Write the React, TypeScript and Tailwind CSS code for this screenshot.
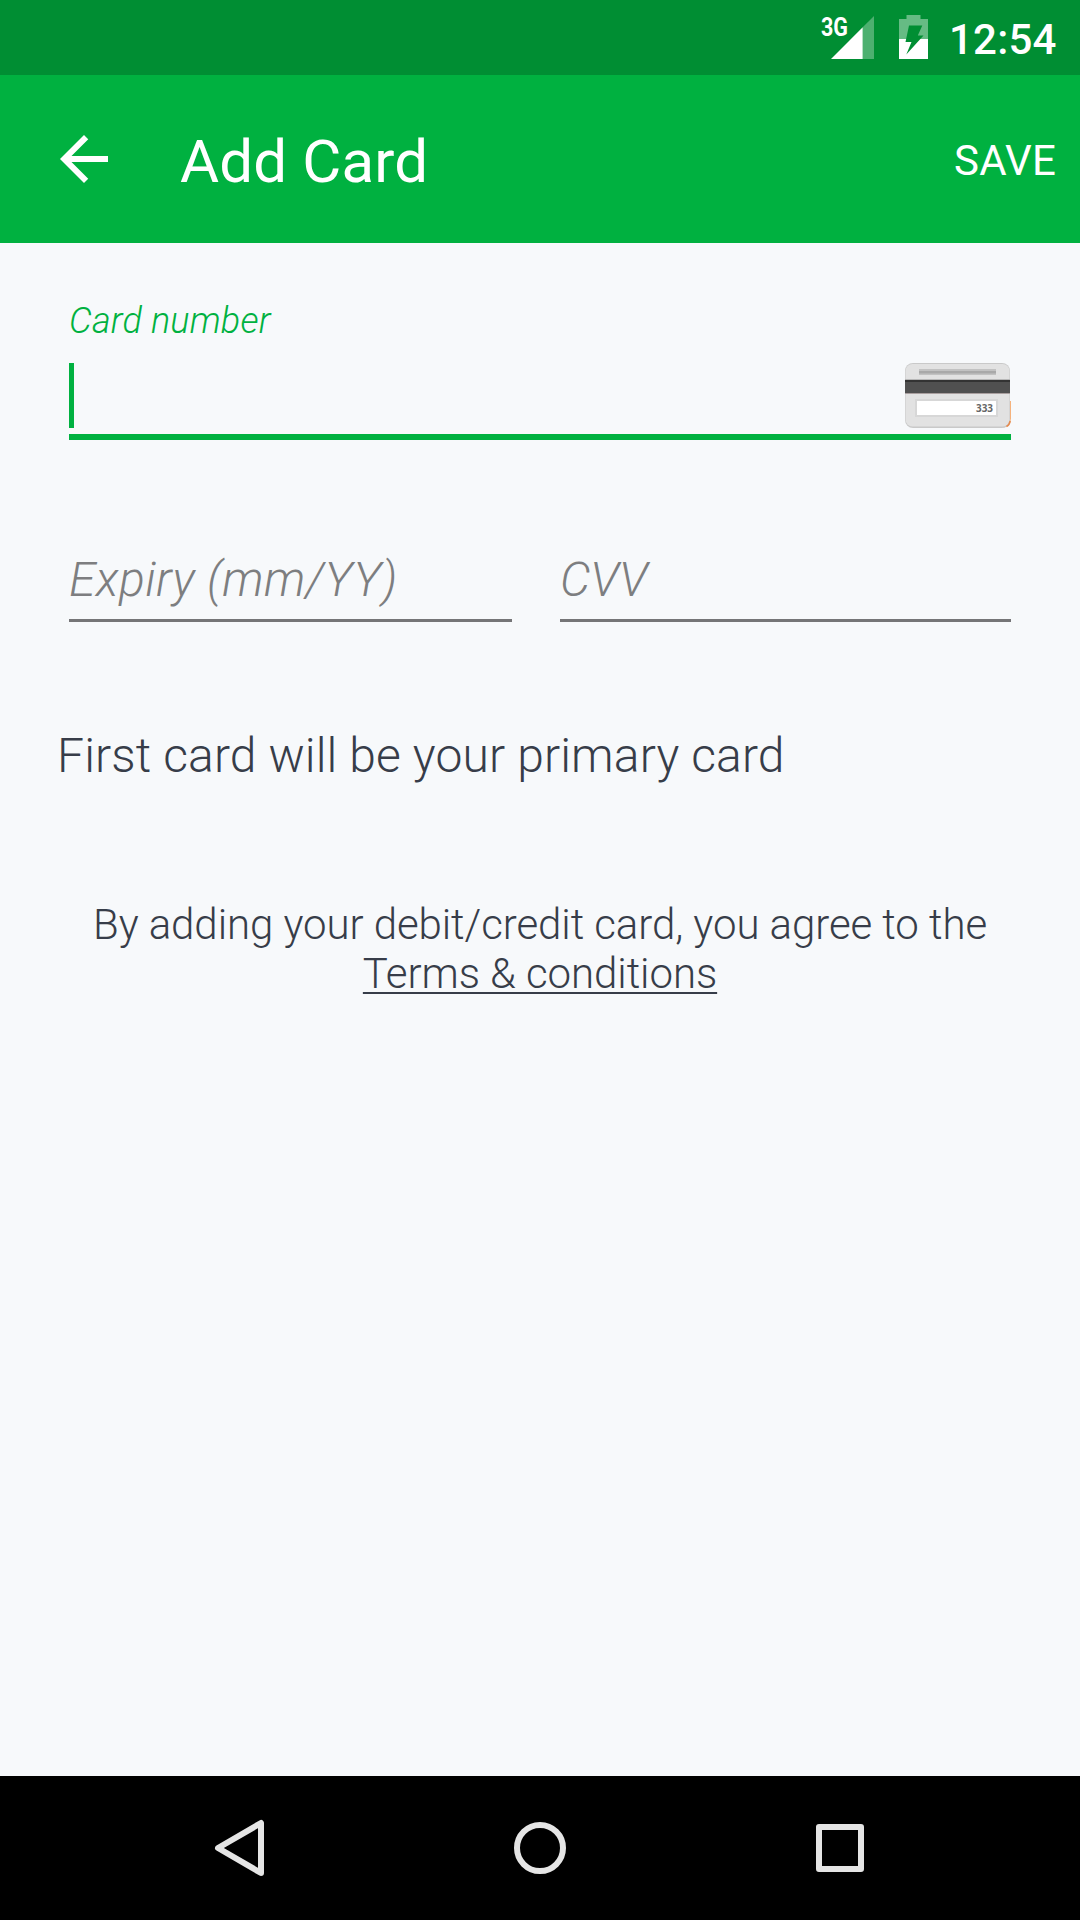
function SignalIcon() {
  return (
    <svg width="54" height="75" viewBox="820 0 54 75" className="block">
      <text x="821" y="35.5" textLength="27" lengthAdjust="spacingAndGlyphs" fill="#fff" className="font-['Roboto',sans-serif] text-[26px] font-bold">3G</text>
      <path d="M862.7 27.3 874 16V59H862.7Z" fill="#fff" fillOpacity="0.3" />
      <path d="M831 59 862.7 27.3V59Z" fill="#fff" />
    </svg>
  );
}

function BatteryIcon() {
  const bolt = "M909 25.5H922.3L917.8 35.5H923.5L906.3 54.5 911.5 42H905.5Z";
  return (
    <svg width="30" height="75" viewBox="899 0 30 75" className="block">
      <path d="M906.5 15H920.5V19H928V39H899V19H906.5Z" fill="#fff" fillOpacity="0.4" />
      <path d="M899 39H928V59H899Z" fill="#fff" />
      <path d={bolt} fill="#008e33" />
    </svg>
  );
}

function CardIcon() {
  return (
    <svg width="106" height="65" viewBox="0 0 106 65" className="block">
      <path d="M98 64.5Q106 64 106 55V38H103V58Z" fill="#f5b27c" />
      <rect x="0" y="0" width="105" height="65" rx="8" fill="#c9c9c9" />
      <rect x="0.5" y="1" width="104" height="62.5" rx="7" fill="#e2e2e2" />
      <path d="M101.500 63.500Q104.500 62 105.200 58" fill="none" stroke="#e58a4e" strokeWidth="1.5" />
      <path d="M105.500 38V56" stroke="#f5b27c" strokeWidth="1" />
      <rect x="14" y="6" width="77" height="6" fill="#c2c2c2" />
      <rect x="14" y="8" width="77" height="2.500" fill="#a9a9a9" />
      <rect x="0" y="16" width="105" height="1" fill="#b8b8b8" />
      <rect x="0" y="17" width="105" height="13" fill="#505050" />
      <rect x="0" y="17" width="105" height="2" fill="#333" />
      <rect x="0" y="30" width="105" height="1" fill="#a99f9f" />
      <rect x="10" y="36" width="83" height="18" fill="#d7d7d7" />
      <rect x="12" y="38" width="79" height="14" fill="#fff" />
      <text x="71" y="48.500" textLength="17" lengthAdjust="spacingAndGlyphs" fill="#666" className="font-['Open_Sans',sans-serif] text-[10.500px] font-bold">333</text>
    </svg>
  );
}

export default function App() {
  return (
    <div className="flex h-[1920px] w-[1080px] flex-col overflow-hidden bg-[#f7f9fb] font-['Roboto',sans-serif] text-[#373d49]">
      <div className="flex h-[75px] shrink-0 items-center justify-end bg-[#008e33] pr-6 text-white">
        <SignalIcon />
        <div className="ml-[25px]"><BatteryIcon /></div>
        <span className="ml-[20px] mt-[4px] w-[107px] text-right text-[42px] font-medium leading-[50px] tracking-[0.2px]">12:54</span>
      </div>
      <header className="flex h-[168px] shrink-0 items-center bg-[#00b140] pl-12 pr-6 text-white">
        <svg width="72" height="72" viewBox="0 0 24 24" fill="#fff">
          <path d="M20 11H7.830l5.590-5.590L12 4l-8 8 8 8 1.410-1.410L7.830 13H20v-2z" />
        </svg>
        <h1 className="ml-[60px] mt-[5px] flex-1 text-[60px] font-normal leading-[60px] tracking-[0.150px]">Add Card</h1>
        <span className="mt-[3px] text-[42px] leading-[50px] tracking-[0.2px]">SAVE</span>
      </header>
      <main className="flex flex-1 flex-col px-[69px] pt-[57px] font-light">
        <div className="border-b-[6px] border-[#00b140] pb-[6px]">
          <div className="text-[36px] italic leading-[42px] tracking-[0.2px] text-[#00b140]">Card number</div>
          <div className="mt-[21px] flex h-[65px] items-stretch justify-between">
            <span className="w-[5px] bg-[#00b140]" />
            <CardIcon />
          </div>
        </div>
        <div className="mt-28 flex justify-between text-[48px] italic leading-[56px] text-[#7d7e80]">
          <div className="w-[443px] border-b-[3px] border-[#757577] pb-[11px] tracking-[0.380px]">Expiry (mm/YY)</div>
          <div className="w-[451px] border-b-[3px] border-[#757577] pb-[11px]">CVV</div>
        </div>
        <p className="-ml-3 mt-[106px] text-[48px] leading-[56px] tracking-[0.130px]">First card will be your primary card</p>
        <p className="mt-[116px] whitespace-nowrap text-center text-[42px] leading-[49px] tracking-[-0.080px]">
          By adding your debit/credit card, you agree to the
          <br />
          <span className="underline decoration-2 underline-offset-[4px] [text-decoration-skip-ink:none]">Terms &amp; conditions</span>
        </p>
      </main>
      <nav className="flex h-36 shrink-0 items-center justify-between bg-black px-[210px]">
        <svg width="60" height="60" viewBox="210 1818 60 60" fill="none" stroke="#e5e5e5" strokeWidth="6" strokeLinejoin="round">
          <path d="M218 1848 261 1823V1873Z" />
        </svg>
        <svg width="60" height="60" viewBox="0 0 60 60" fill="none" stroke="#e5e5e5" strokeWidth="6">
          <circle cx="30" cy="30" r="23" />
        </svg>
        <svg width="60" height="60" viewBox="0 0 60 60" fill="none" stroke="#e5e5e5" strokeWidth="6" strokeLinejoin="round">
          <rect x="9" y="9" width="42" height="42" />
        </svg>
      </nav>
    </div>
  );
}
